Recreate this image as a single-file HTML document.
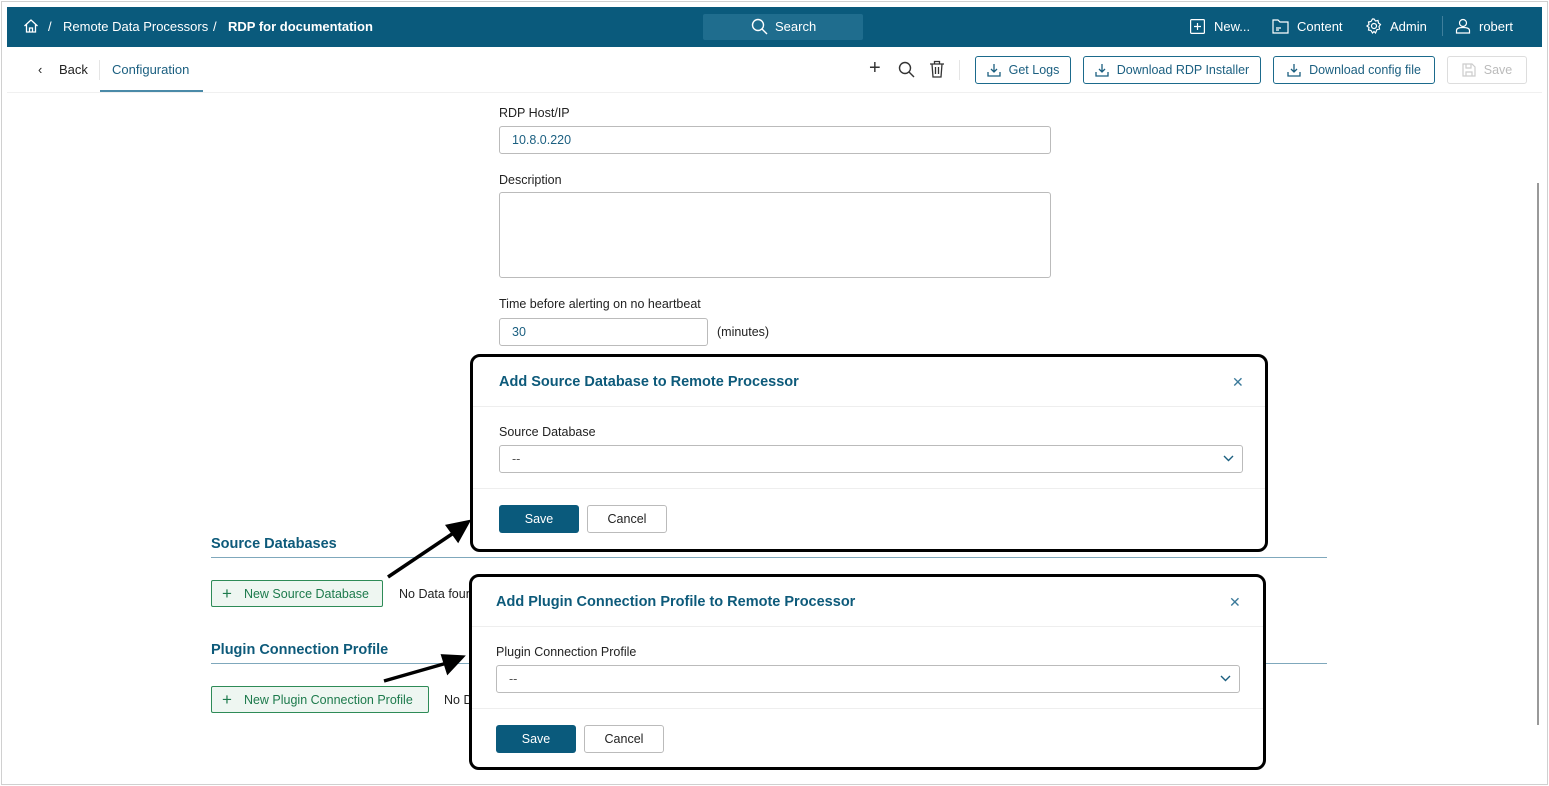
<!DOCTYPE html>
<html><head><meta charset="utf-8"><style>
*{box-sizing:border-box;margin:0;padding:0}
body{width:1549px;height:786px;background:#fff;font-family:"Liberation Sans",sans-serif;position:relative;overflow:hidden;font-size:13px;color:#222}
.abs{position:absolute}
.frame{left:1px;top:1px;width:1547px;height:784px;border:1px solid #d0d0d0}
.hdr{left:7px;top:7px;width:1535px;height:40px;background:#0a5a7c;color:#fff}
.hdr span{position:absolute;top:12px;font-size:13px}
.btn{position:absolute;height:28px;border:1px solid #1b6a8c;border-radius:3px;color:#1b5f80;font-size:12.5px;display:flex;align-items:center;justify-content:center;gap:8px;background:#fff}
.lbl{position:absolute;font-size:12.5px;color:#222}
.inp{position:absolute;border:1px solid #bbb;border-radius:3px;background:#fff;font-size:12.5px;color:#1b5f80;padding-left:12px;display:flex;align-items:center}
.sec{position:absolute;font-weight:bold;color:#0d5a7a;font-size:14.5px}
.hr{position:absolute;height:1px;background:#7fa8bc}
.gbtn{position:absolute;height:27px;border:1px solid #2e8b57;background:#eef6f1;color:#1d7a4c;border-radius:2px;font-size:12.5px;display:flex;align-items:center;padding-left:10px;gap:12px}
.modal{position:absolute;border:3px solid #000;border-radius:10px;background:#fff}
.mt{position:absolute;left:26px;top:17px;font-weight:bold;color:#0d5a7a;font-size:14.5px}
.mx{position:absolute;color:#3b7a9a;font-size:14px}
.sep{position:absolute;left:0;right:0;height:1px;background:#eee}
.save{position:absolute;width:80px;height:28px;background:#0a5a7c;color:#fff;border-radius:3px;font-size:12.5px;display:flex;align-items:center;justify-content:center}
.cancel{position:absolute;width:80px;height:28px;border:1px solid #bbb;color:#222;border-radius:3px;font-size:12.5px;display:flex;align-items:center;justify-content:center}
</style></head><body>
<svg width="0" height="0" style="position:absolute"><defs><symbol id="dl" viewBox="0 0 14 14"><path d="M7 1v8M4 6l3 3 3-3M1 9v4h12V9" fill="none" stroke="#1b5f80" stroke-width="1.3"/></symbol></defs></svg>
<div class="abs frame"></div>
<div class="abs hdr">
<svg class="abs" style="left:16px;top:11px" width="16" height="16" viewBox="0 0 16 16" fill="none" stroke="#fff" stroke-width="1.3"><path d="M1.5 8L8 2l6.5 6M3.5 6.5V14h9V6.5M6.5 14v-4h3v4"/></svg>
<span style="left:41px">/</span><span style="left:56px">Remote Data Processors</span><span style="left:206px">/</span><span style="left:221px;font-weight:bold">RDP for documentation</span>
<div class="abs" style="left:696px;top:7px;width:160px;height:26px;background:#1f6d8e;border-radius:2px"></div>
<svg class="abs" style="left:744px;top:11px" width="17" height="17" viewBox="0 0 17 17" fill="none" stroke="#fff" stroke-width="1.4"><circle cx="7" cy="7" r="5.5"/><path d="M11 11l5 5"/></svg>
<span style="left:768px">Search</span>
<svg class="abs" style="left:1183px;top:12px" width="15" height="15" viewBox="0 0 15 15" fill="none" stroke="#fff" stroke-width="1.2"><rect x="0.6" y="0.6" width="13.8" height="13.8" rx="1"/><path d="M7.5 4v7M4 7.5h7"/></svg>
<span style="left:1207px">New...</span>
<svg class="abs" style="left:1265px;top:12px" width="17" height="15" viewBox="0 0 17 15" fill="none" stroke="#fff" stroke-width="1.2"><path d="M1 1h5l2 2h8v11H1z M4 9h5M4 11h3"/></svg>
<span style="left:1290px">Content</span>
<svg class="abs" style="left:1359px;top:11px" width="16" height="16" viewBox="0 0 16 16" fill="none" stroke="#fff" stroke-width="1.2"><circle cx="8" cy="8" r="2.5"/><path d="M8 1l1.5 2 2.5-.5.5 2.5 2 1.5-1.5 2 .5 2.5-2.5.5L9.5 15 8 13.5 6.5 15 5 12.5l-2.5-.5.5-2.5L1 8l2-1.5L2.5 4 5 3.5 6.5 1z"/></svg>
<span style="left:1383px">Admin</span>
<div class="abs" style="left:1435px;top:9px;width:1px;height:20px;background:#3f7f9c"></div>
<svg class="abs" style="left:1448px;top:11px" width="16" height="16" viewBox="0 0 16 16" fill="none" stroke="#fff" stroke-width="1.2"><circle cx="8" cy="5" r="3.5"/><path d="M1.5 15v-2.5c0-2 2-3 6.5-3s6.5 1 6.5 3V15z"/></svg>
<span style="left:1472px">robert</span>
</div>
<div class="abs" style="left:38px;top:62px;font-size:13px">‹</div>
<div class="abs" style="left:59px;top:62px;font-size:13px">Back</div>
<div class="abs" style="left:99px;top:60px;width:1px;height:20px;background:#e5e5e5"></div>
<div class="abs" style="left:112px;top:62px;font-size:13px;color:#1b5f80">Configuration</div>
<div class="abs" style="left:100px;top:90px;width:103px;height:2px;background:#4a8aa8"></div>
<div class="abs" style="left:7px;top:92px;width:1535px;height:1px;background:#f0f0f0"></div>
<div class="abs" style="left:869px;top:57px;font-size:20px;color:#333">+</div>
<svg class="abs" style="left:898px;top:61px" width="17" height="17" viewBox="0 0 17 17" fill="none" stroke="#333" stroke-width="1.4"><circle cx="7" cy="7" r="5.5"/><path d="M11 11l5 5"/></svg>
<svg class="abs" style="left:929px;top:60px" width="16" height="18" viewBox="0 0 16 18" fill="none" stroke="#333" stroke-width="1.3"><path d="M1 4h14M5.5 4V1.5h5V4M3 4l1 13h8l1-13M6.5 7v7M9.5 7v7"/></svg>
<div class="abs" style="left:959px;top:60px;width:1px;height:20px;background:#e5e5e5"></div>
<div class="btn" style="left:975px;top:56px;width:96px"><svg width="14" height="14"><use href="#dl"/></svg>Get Logs</div>
<div class="btn" style="left:1083px;top:56px;width:178px"><svg width="14" height="14"><use href="#dl"/></svg>Download RDP Installer</div>
<div class="btn" style="left:1273px;top:56px;width:162px"><svg width="14" height="14"><use href="#dl"/></svg>Download config file</div>
<div class="btn" style="left:1447px;top:56px;width:80px;border-color:#ddd;color:#bbb"><svg width="14" height="14" viewBox="0 0 14 14" fill="none" stroke="#ccc" stroke-width="1.2"><path d="M1 1h9l3 3v9H1zM4 1v4h5V1M4 13V9h6v4"/></svg>Save</div>
<div class="lbl" style="left:499px;top:106px">RDP Host/IP</div>
<div class="inp" style="left:499px;top:126px;width:552px;height:28px">10.8.0.220</div>
<div class="lbl" style="left:499px;top:173px">Description</div>
<div class="inp" style="left:499px;top:192px;width:552px;height:86px"></div>
<div class="lbl" style="left:499px;top:297px">Time before alerting on no heartbeat</div>
<div class="inp" style="left:499px;top:318px;width:209px;height:28px">30</div>
<div class="lbl" style="left:717px;top:325px">(minutes)</div>
<div class="sec" style="left:211px;top:536px">Source Databases</div>
<div class="hr" style="left:211px;top:557px;width:1116px"></div>
<div class="gbtn" style="left:211px;top:580px;width:172px"><span style="font-size:17px">+</span>New Source Database</div>
<div class="lbl" style="left:399px;top:587px">No Data found</div>
<div class="sec" style="left:211px;top:642px">Plugin Connection Profile</div>
<div class="hr" style="left:211px;top:663px;width:1116px"></div>
<div class="gbtn" style="left:211px;top:686px;width:218px"><span style="font-size:17px">+</span>New Plugin Connection Profile</div>
<div class="lbl" style="left:444px;top:693px">No Data found</div>
<div class="abs" style="left:1537px;top:183px;width:2px;height:542px;background:#999"></div>
<svg class="abs" style="left:0;top:0" width="1549" height="786"><g stroke="#000" stroke-width="3.5" fill="#000"><line x1="388" y1="577" x2="455" y2="532"/><polygon points="468,522 448,526 458,540"/><line x1="384" y1="681" x2="447" y2="663"/><polygon points="462,657 443,656 448,672"/></g></svg>
<div class="modal" style="left:470px;top:354px;width:798px;height:198px">
<div class="mt">Add Source Database to Remote Processor</div>
<div class="mx" style="left:759px;top:17px">✕</div>
<div class="sep" style="top:49px"></div>
<div class="lbl" style="left:26px;top:68px">Source Database</div>
<div class="inp" style="left:26px;top:88px;width:744px;height:28px;color:#555">--</div>
<svg class="abs" style="left:750px;top:98px" width="11" height="7" viewBox="0 0 11 7" fill="none" stroke="#1b5f80" stroke-width="1.4"><path d="M1 1l4.5 4.5L10 1"/></svg>
<div class="sep" style="top:131px"></div>
<div class="save" style="left:26px;top:148px">Save</div>
<div class="cancel" style="left:114px;top:148px">Cancel</div>
</div>
<div class="modal" style="left:469px;top:574px;width:797px;height:196px">
<div class="mt" style="left:24px">Add Plugin Connection Profile to Remote Processor</div>
<div class="mx" style="left:757px;top:17px">✕</div>
<div class="sep" style="top:49px"></div>
<div class="lbl" style="left:24px;top:68px">Plugin Connection Profile</div>
<div class="inp" style="left:24px;top:88px;width:744px;height:28px;color:#555">--</div>
<svg class="abs" style="left:748px;top:98px" width="11" height="7" viewBox="0 0 11 7" fill="none" stroke="#1b5f80" stroke-width="1.4"><path d="M1 1l4.5 4.5L10 1"/></svg>
<div class="sep" style="top:131px"></div>
<div class="save" style="left:24px;top:148px">Save</div>
<div class="cancel" style="left:112px;top:148px">Cancel</div>
</div>
</body></html>
